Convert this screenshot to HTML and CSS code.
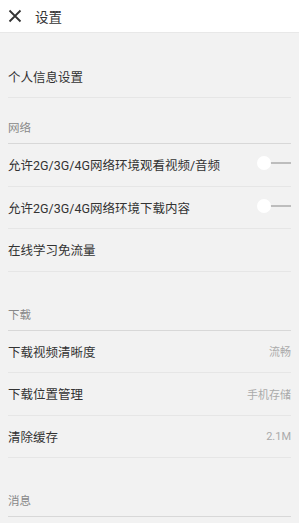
FILE: index.html
```html
<!DOCTYPE html>
<html lang="zh-CN">
<head>
    <meta charset="UTF-8">
    <meta name="viewport" content="width=device-width, initial-scale=1.0">
    <title>设置</title>
    <link rel="stylesheet" href="styles.css">
</head>
<body>

<div class="header">
    <svg class="close" width="14" height="14" viewBox="0 0 14 14">
        <path d="M1.5 1.5 L12.5 12.5 M12.5 1.5 L1.5 12.5" stroke="#333" stroke-width="1.8" fill="none"/>
    </svg>
    <span class="title">设置</span>
</div>

<div class="list">
    <div class="row first"><span>个人信息设置</span></div>

    <div class="label">网络</div>
    <div class="row"><span>允许2G/3G/4G网络环境观看视频/音频</span><span class="toggle"></span></div>
    <div class="row"><span>允许2G/3G/4G网络环境下载内容</span><span class="toggle"></span></div>
    <div class="row"><span>在线学习免流量</span></div>

    <div class="label gap">下载</div>
    <div class="row"><span>下载视频清晰度</span><span class="value">流畅</span></div>
    <div class="row"><span>下载位置管理</span><span class="value">手机存储</span></div>
    <div class="row"><span>清除缓存</span><span class="value">2.1M</span></div>

    <div class="label gap">消息</div>
</div>

</body>
</html>
```

FILE: styles.css
```css
body{
    margin: 0;
    background-color: #f2f2f2;
    font-family: Roboto, "Noto Sans CJK SC", sans-serif;
    color: #333;
    overflow: hidden;
}
.header{
    height: 33px;
    background-color: white;
    border-bottom: 1px solid #e8e8e8;
    display: flex;
    align-items: center;
    padding-left: 8px;
    box-sizing: border-box;
}
.close{
    margin-right: 13px;
}
.title{
    font-size: 13.5px;
    color: #333;
}
.list{
    padding: 0 8px;
}
.row{
    height: 42.5px;
    border-bottom: 1px solid #e6e6e6;
    display: flex;
    align-items: center;
    justify-content: space-between;
    font-size: 12.5px;
    box-sizing: border-box;
}
.row.first{
    margin-top: 22px;
    height: 43px;
}
.label{
    height: 46px;
    padding-top: 22px;
    box-sizing: border-box;
    font-size: 11.5px;
    line-height: 16px;
    color: #888;
    border-bottom: 1px solid #d8d8d8;
}
.label.gap{
    height: 59px;
    padding-top: 35px;
}
.value{
    font-size: 11px;
    color: #aaa;
}
.toggle{
    position: relative;
    width: 34px;
    height: 14px;
    margin-top: -3px;
}
.toggle::before{
    content: "";
    position: absolute;
    right: 0;
    top: 6px;
    width: 22px;
    height: 2px;
    background-color: #bdbdbd;
}
.toggle::after{
    content: "";
    position: absolute;
    left: 0;
    top: 0;
    width: 14px;
    height: 14px;
    border-radius: 50%;
    background-color: white;
}
```
